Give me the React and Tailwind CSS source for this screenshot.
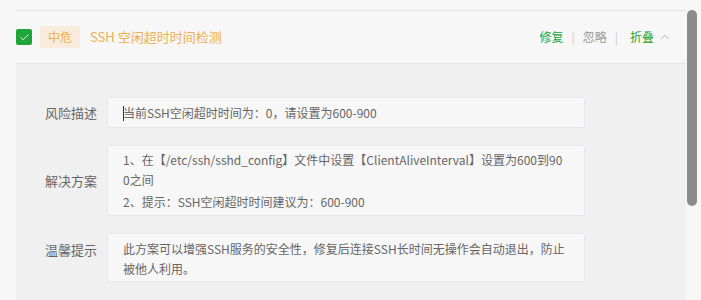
import { ChevronUp, Check } from 'lucide-react'

const rows = [
  {
    label: '风险描述',
    paras: [['当前SSH空闲超时时间为：0，请设置为600-900']],
    caret: true,
    pad: 'pt-[5px] pb-[4px]',
  },
  {
    label: '解决方案',
    paras: [
      ['1、在【/etc/ssh/sshd_config】文件中设置【ClientAliveInterval】设置为600到90', '0之间'],
      ['2、提示：SSH空闲超时时间建议为：600-900'],
    ],
    pad: 'pt-[4px] pb-[3px]',
  },
  {
    label: '温馨提示',
    paras: [['此方案可以增强SSH服务的安全性，修复后连接SSH长时间无操作会自动退出，防止', '被他人利用。']],
    pad: 'pt-[5px] pb-[2px]',
    labelShift: 'mb-[16px]',
  },
]

export default function App() {
  return (
    <div className="relative h-[300px] overflow-hidden bg-[#f7f7f7] pl-4 pr-[15px] pt-[10px] font-['Noto_Sans_CJK_SC',sans-serif]">
      <div className="border-t border-[#e4e4e9]">
        {/* Header */}
        <div className="flex h-[53px] items-center border-b border-[#e4e4e9]">
          <div className="flex h-4 w-4 items-center justify-center rounded-[2px] bg-[#20a53a]">
            <Check size={11} strokeWidth={2} color="#fff" />
          </div>
          <span className="ml-2 flex h-[22px] w-10 items-center justify-center rounded-[2px] bg-[#faecdc] text-[12px] text-[#f0ad4e]">
            中危
          </span>
          <span className="ml-[10px] text-[13px] text-[#f0ad4e]">SSH 空闲超时时间检测</span>
          <div className="ml-auto mr-[14px] flex items-center text-[12px]">
            <span className="text-[#20a53a]">修复</span>
            <span className="mx-[8px] text-[#cccccc]">|</span>
            <span className="text-[#999999]">忽略</span>
            <span className="ml-[8px] mr-[12px] text-[#cccccc]">|</span>
            <span className="text-[#20a53a]">折叠</span>
            <ChevronUp size={14} strokeWidth={1.3} color="#999" className="ml-[4px]" />
          </div>
        </div>

        {/* Body */}
        <div className="bg-[#f0f0f0] pt-[33px] pb-6">
          <div className="flex flex-col gap-[17px]">
            {rows.map(r => (
              <div key={r.label} className="flex items-center">
                <div className={`w-[81px] shrink-0 text-right text-[13px] text-[#666666] ${r.labelShift || ''}`}>
                  {r.label}
                </div>
                <div
                  className={`ml-[10px] w-[478px] rounded-[2px] border border-[#e6e6ec] bg-[#f7f7f7] pl-[15px] pr-[16px] text-[12px] leading-[20px] text-[#666666] ${r.pad}`}
                >
                  {r.paras.map((lines, i) => (
                    <div key={i} className={i > 0 ? 'mt-[2px]' : ''}>
                      {lines.map((l, j) => (
                        <div key={j} className="whitespace-nowrap">
                          {r.caret && j === 0 && (
                            <span className="-mr-px inline-block h-[15px] w-px bg-[#333] align-[-3px]" />
                          )}
                          {l}
                        </div>
                      ))}
                    </div>
                  ))}
                </div>
              </div>
            ))}
          </div>
        </div>
      </div>

      {/* overlay scrollbar */}
      <div className="absolute right-[4px] top-[10px] h-[196px] w-[10px] rounded-[5px] bg-[#8b8b8b]" />
    </div>
  )
}
